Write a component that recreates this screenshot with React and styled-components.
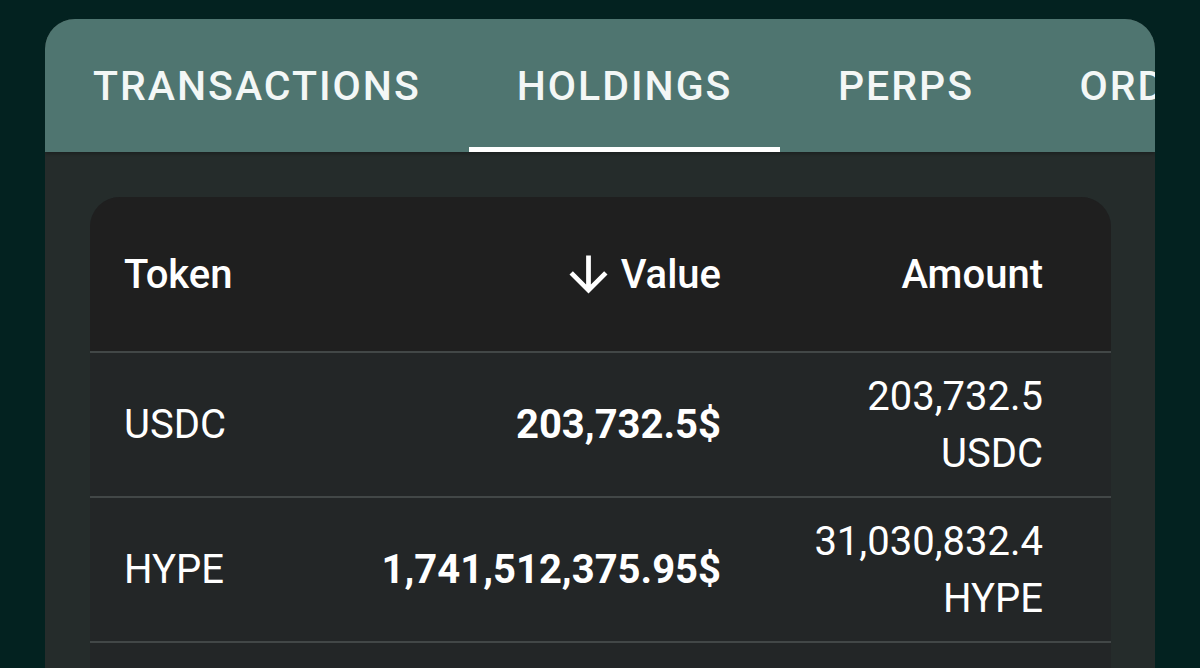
import React from "react";
import styled, { createGlobalStyle } from "styled-components";

const GlobalStyle = createGlobalStyle`
  html, body {
    margin: 0;
    padding: 0;
    background: #032220;
    font-family: Roboto, "Liberation Sans", sans-serif;
    overflow: hidden;
  }
`;

const Page = styled.div`
  width: 1200px;
  height: 668px;
  padding: 19px 45px 0;
  box-sizing: border-box;
  background: #032220;
`;

const Card = styled.div`
  height: 100%;
  border-radius: 30px 30px 0 0;
  overflow: hidden;
  background: #252c2b;
  display: flex;
  flex-direction: column;
`;

const TabBar = styled.div`
  height: 133px;
  flex-shrink: 0;
  display: flex;
  background: #4f7570;
  box-shadow: 0 2px 3px rgba(0, 0, 0, 0.25);
`;

const Tab = styled.div`
  position: relative;
  flex-shrink: 0;
  min-width: 251px;
  padding: 0 48px;
  box-sizing: border-box;
  display: flex;
  align-items: center;
  justify-content: center;
  color: #f3f7f6;
  font-size: 41px;
  font-weight: 500;
  letter-spacing: 2px;
  white-space: nowrap;

  &::after {
    content: "";
    position: absolute;
    left: 0;
    right: 0;
    bottom: 0;
    height: 5px;
    background: ${(p) => (p.$active ? "#ffffff" : "transparent")};
  }
`;

const Panel = styled.div`
  flex: 1;
  padding: 45px 44px 0 45px;
`;

const Table = styled.div`
  border-radius: 30px 30px 0 0;
  overflow: hidden;
  background: #232627;
`;

const Row = styled.div`
  display: grid;
  grid-template-columns: 340px 325px 322px 1fr;
  height: ${(p) => (p.$head ? "154px" : "143px")};
  background: ${(p) => (p.$head ? "#1f1f1f" : "#232627")};
  border-bottom: 2px solid #424747;
`;

const Cell = styled.div`
  display: flex;
  flex-direction: column;
  justify-content: center;
  align-items: ${(p) => (p.$right ? "flex-end" : "flex-start")};
  padding: 0 34px;
  color: #ffffff;
  font-size: 40px;
  font-weight: ${(p) => (p.$head ? 500 : p.$bold ? 700 : 400)};
  line-height: 57px;
  white-space: nowrap;
`;

const SortLabel = styled.span`
  display: flex;
  align-items: center;
  gap: 4px;

  svg {
    width: 57px;
    height: 57px;
    fill: #ffffff;
  }
`;

const ArrowDown = () => (
  <svg viewBox="0 0 24 24">
    <path d="M20 12l-1.41-1.41L13 16.17V4h-2v12.17l-5.58-5.59L4 12l8 8 8-8z" />
  </svg>
);

const holdings = [
  { token: "USDC", value: "203,732.5$", amount: "203,732.5" },
  { token: "HYPE", value: "1,741,512,375.95$", amount: "31,030,832.4" },
];

const tabs = ["TRANSACTIONS", "HOLDINGS", "PERPS", "ORDERS"];

export default function App() {
  return (
    <>
      <GlobalStyle />
      <Page>
        <Card>
          <TabBar>
            {tabs.map((t) => (
              <Tab key={t} $active={t === "HOLDINGS"}>
                {t}
              </Tab>
            ))}
          </TabBar>
          <Panel>
            <Table>
              <Row $head>
                <Cell $head>Token</Cell>
                <Cell $head $right>
                  <SortLabel>
                    <ArrowDown />
                    Value
                  </SortLabel>
                </Cell>
                <Cell $head $right>
                  Amount
                </Cell>
              </Row>
              {holdings.map((h) => (
                <Row key={h.token}>
                  <Cell>{h.token}</Cell>
                  <Cell $right $bold>
                    {h.value}
                  </Cell>
                  <Cell $right>
                    <span>{h.amount}</span>
                    <span>{h.token}</span>
                  </Cell>
                </Row>
              ))}
              <Row />
            </Table>
          </Panel>
        </Card>
      </Page>
    </>
  );
}
